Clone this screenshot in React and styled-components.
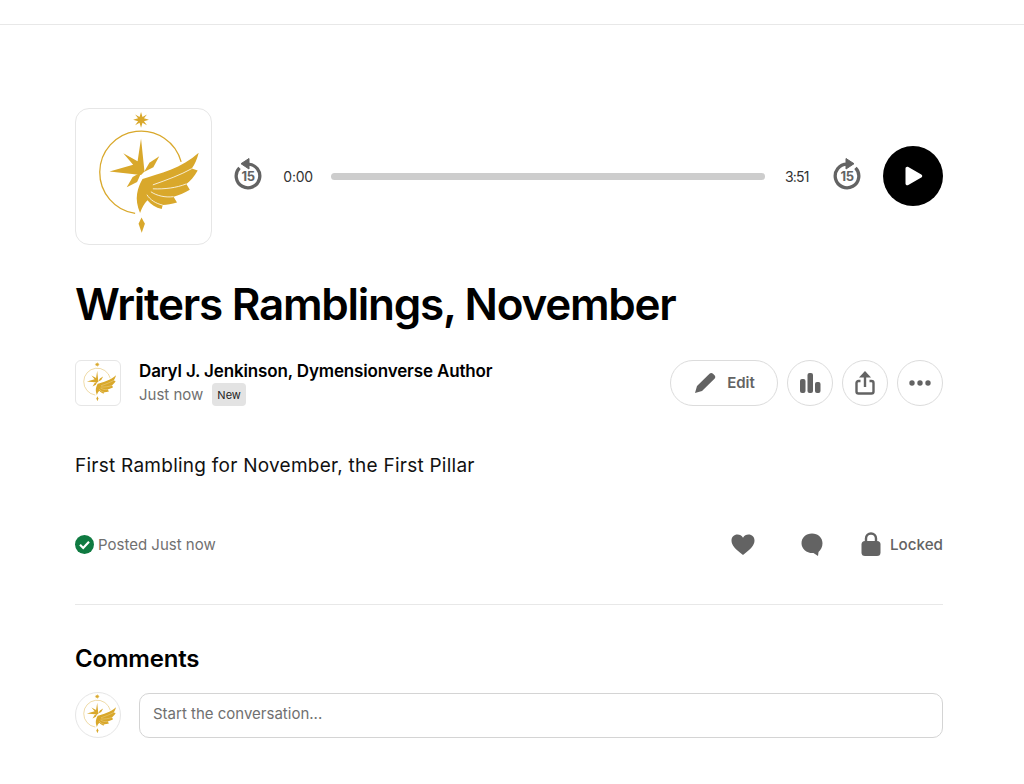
import React from 'react';
import styled, { createGlobalStyle } from 'styled-components';

const GlobalStyle = createGlobalStyle`
    html, body {
        margin: 0;
        background: #fff;
        font-family: Inter, "Liberation Sans", sans-serif;
        color: #000;
    }
    * {
        box-sizing: border-box;
    }
`;

const Page = styled.div`
    height: 784px;
    overflow: hidden;
`;

const TopBar = styled.div`
    height: 25px;
    border-bottom: 1px solid #e8e8e8;
`;

const Main = styled.main`
    padding: 83px 81px 0 75px;
`;

const Player = styled.section`
    display: flex;
    align-items: center;
    height: 137px;
`;

const Artwork = styled.div`
    width: 137px;
    height: 137px;
    flex: none;
    border: 1px solid #e6e6e6;
    border-radius: 14px;
    background: #fff;
`;

const Controls = styled.div`
    flex: 1;
    display: flex;
    align-items: center;
    margin-left: 22px;
    padding-bottom: 1px;
`;

const SkipIcon = styled.svg`
    width: 28px;
    height: 36px;
    flex: none;
    color: #636363;
`;

const Time = styled.span`
    font-size: 14px;
    letter-spacing: ${(p) => p.$spacing}px;
    color: #333;
    flex: none;
    width: ${(p) => p.$width}px;
    text-align: ${(p) => p.$align};
`;

const Track = styled.div`
    flex: 1;
    height: 7px;
    margin: 0 20px 0 18px;
    border-radius: 4px;
    background: #cdcdcd;
`;

const SkipGap = styled.span`
    width: 24px;
    flex: none;
`;

const PlayButton = styled.button`
    width: 60px;
    height: 60px;
    flex: none;
    margin-left: 22px;
    padding: 0;
    border: 0;
    border-radius: 50%;
    background: #000;
    display: flex;
    align-items: center;
    justify-content: center;
`;

const Title = styled.h1`
    margin: 30px 0 0;
    font-size: 44px;
    line-height: 58px;
    font-weight: 600;
    letter-spacing: -1.25px;
`;

const MetaRow = styled.div`
    display: flex;
    align-items: center;
    justify-content: space-between;
    margin-top: 27px;
    height: 46px;
`;

const Author = styled.div`
    display: flex;
    align-items: center;
    gap: 18px;
`;

const Avatar = styled.div`
    width: 46px;
    height: 46px;
    flex: none;
    border: 1px solid #e6e6e6;
    border-radius: ${(p) => (p.$round ? '50%' : '6px')};
    background: #fff;
    overflow: hidden;
`;

const AuthorName = styled.div`
    font-size: 17px;
    line-height: 22px;
    font-weight: 600;
    letter-spacing: -0.15px;
    margin-top: -1px;
`;

const AuthorSub = styled.div`
    display: flex;
    align-items: center;
    gap: 9px;
    margin-top: 1px;
    font-size: 15px;
    color: #707070;
`;

const Badge = styled.span`
    padding: 0 5px;
    height: 23px;
    line-height: 24px;
    border-radius: 4px;
    background: #e3e3e3;
    color: #222;
    font-size: 11px;
    font-weight: 400;
`;

const Actions = styled.div`
    display: flex;
    align-items: center;
    gap: 9px;
`;

const ActionButton = styled.button`
    height: 46px;
    width: ${(p) => (p.$wide ? '108px' : '46px')};
    padding: 0;
    border: 1px solid #dcdcdc;
    border-radius: 23px;
    background: #fff;
    color: #636363;
    display: flex;
    align-items: center;
    justify-content: center;
    gap: 10px;
    font-family: inherit;
    font-size: 15px;
    font-weight: 600;
`;

const EditLabel = styled.span`
    margin-bottom: 2px;
`;

const Body = styled.p`
    margin: 47px 0 0;
    font-size: 19px;
    letter-spacing: 0.25px;
    line-height: 26px;
    color: #111;
`;

const StatusRow = styled.div`
    display: flex;
    align-items: center;
    justify-content: space-between;
    margin-top: 51px;
    height: 28px;
`;

const Posted = styled.div`
    display: flex;
    align-items: center;
    gap: 4px;
    font-size: 15px;
    color: #707070;
`;

const Reactions = styled.div`
    display: flex;
    align-items: center;
    color: #636363;
`;

const ReactionIcon = styled.svg`
    width: 26px;
    height: 26px;
    margin-right: ${(p) => p.$gap}px;
`;

const Locked = styled.span`
    font-size: 15.2px;
    font-weight: 500;
    margin-left: 8px;
`;

const Divider = styled.hr`
    margin: 46px 0 0;
    border: 0;
    border-top: 1px solid #e8e8e8;
`;

const CommentsTitle = styled.h2`
    margin: 39px 0 0;
    font-size: 24px;
    line-height: 30px;
    font-weight: 600;
    letter-spacing: -0.2px;
`;

const CommentRow = styled.div`
    display: flex;
    align-items: center;
    gap: 18px;
    margin-top: 18px;
`;

const CommentInput = styled.div`
    flex: 1;
    height: 45px;
    padding: 0 0 3px 13px;
    display: flex;
    align-items: center;
    border: 1px solid #d4d4d4;
    border-radius: 10px;
    font-size: 15px;
    color: #707070;
`;

const Logo = () => (
    <svg viewBox="0 0 137 137" width="100%" height="100%" style={{ display: 'block' }}>
        <g fill="#d9a82b">
            <path d="M66 3l1.500 5L72 5.500 69 9.500 74 11l-5 1.500 3 4-4.500-2.500L66 19l-1.500-5L60 16.500l3-4L58 11l5-1.500-3-4L64.500 8z" />
            <path d="M66 30l3.500 33.500L66 67 34 63.500l24-7-10-11.500 14.500 8z" />
            <path d="M84.500 48l-6 11-9.500 5 5.500-9.500z" />
            <path d="M51.500 79.500l6-10.500 9-5-4.500 10z" />
            <path d="M66.500 110l3.400 6.500-3.200 9-3.200-9z" />
            <path d="M67.500 71C84 66 108 60 124.500 44.500 123 51 120.500 56.500 117.500 60.500L123.500 62.500C120 69 116 73 112 76L115.500 82C110 85.500 104 87.500 99 89L102.500 95C97 96.500 92.500 97.500 88 97.500L87 101.500C81 100 76 97 72.500 92.500 69 96 67 100 65 105.500 62 98 61 92 62 86 63 80 65 75 67.500 71z" />
        </g>
        <path d="M106.700 53.700A42 42 0 1 0 60 106" fill="none" stroke="#d9a82b" strokeWidth="1.300" />
        <g fill="none" stroke="#fff" strokeWidth="0.800">
            <path d="M117.500 60.500C106 67 92 72 78 77" />
            <path d="M112 76C102 80 90 81.500 78 81" />
            <path d="M99 89C90 90 82 88 76 84" />
            <path d="M88 97.500C81 96 75 92 72 87" />
        </g>
    </svg>
);

// back and forward share the ring and arrow, only the label stays unmirrored
const Skip = ({ forward }) => (
    <SkipIcon viewBox="0 0 28 36">
        <g transform={forward ? 'translate(28 0) scale(-1 1)' : undefined}>
            <path d="M14 6.200A11.800 11.800 0 1 1 5.500 9.800" fill="none" stroke="currentColor" strokeWidth="3.300" />
            <path d="M15 .5v10.500L7 5.700z" fill="currentColor" stroke="currentColor" strokeWidth="1" strokeLinejoin="round" />
        </g>
        <text x="14" y="22.800" textAnchor="middle" fontFamily="Inter, sans-serif" fontSize="13" fontWeight="700" fill="currentColor" letterSpacing="-0.4">15</text>
    </SkipIcon>
);

const App = () => {
    return (
        <Page>
            <GlobalStyle />
            <TopBar />
            <Main>
                <Player>
                    <Artwork><Logo /></Artwork>
                    <Controls>
                        <Skip />
                        <Time $width={51} $align="right" $spacing={-0.2}>0:00</Time>
                        <Track />
                        <Time $width={24} $align="left" $spacing={-0.8}>3:51</Time>
                        <SkipGap />
                        <Skip forward />
                        <PlayButton aria-label="Play">
                            <svg width="22" height="22" viewBox="0 0 22 22">
                                <path d="M3.500 3.500c0-1.500 1.500-2.300 2.800-1.500l13 7.500c1.300.7 1.300 2.400 0 3.100l-13 7.400c-1.300.8-2.800 0-2.800-1.500z" fill="#fff" />
                            </svg>
                        </PlayButton>
                    </Controls>
                </Player>
                <Title>Writers Ramblings, November</Title>
                <MetaRow>
                    <Author>
                        <Avatar><Logo /></Avatar>
                        <div>
                            <AuthorName>Daryl J. Jenkinson, Dymensionverse Author</AuthorName>
                            <AuthorSub>Just now <Badge>New</Badge></AuthorSub>
                        </div>
                    </Author>
                    <Actions>
                        <ActionButton $wide>
                            <svg width="24" height="24" viewBox="0 0 24 24">
                                <path d="M2 22l2-7L16.500 2.800c1-1 2.500-1 3.500 0l1.500 1.500c1 1 1 2.500 0 3.500L9 20z" fill="currentColor" />
                            </svg>
                            <EditLabel>Edit</EditLabel>
                        </ActionButton>
                        <ActionButton aria-label="Insights">
                            <svg width="24" height="24" viewBox="0 0 24 24">
                                <rect x="2" y="8" width="5.500" height="14" rx="2" fill="currentColor" />
                                <rect x="9.500" y="2" width="5.500" height="20" rx="2" fill="currentColor" />
                                <rect x="17" y="11" width="5.500" height="11" rx="2" fill="currentColor" />
                            </svg>
                        </ActionButton>
                        <ActionButton aria-label="Share">
                            <svg width="24" height="26" viewBox="0 0 24 26" fill="none" stroke="currentColor" strokeWidth="2.400">
                                <path d="M7.500 11H5.500a2 2 0 0 0-2 2v8.500a2 2 0 0 0 2 2h13a2 2 0 0 0 2-2V13a2 2 0 0 0-2-2h-2" />
                                <path d="M12 17V3" />
                                <path d="M12 1l6 6.500H6z" fill="currentColor" stroke="none" />
                            </svg>
                        </ActionButton>
                        <ActionButton aria-label="More">
                            <svg width="22" height="6" viewBox="0 0 22 6" fill="currentColor">
                                <circle cx="3" cy="3" r="2.700" />
                                <circle cx="11" cy="3" r="2.700" />
                                <circle cx="19" cy="3" r="2.700" />
                            </svg>
                        </ActionButton>
                    </Actions>
                </MetaRow>
                <Body>First Rambling for November, the First Pillar</Body>
                <StatusRow>
                    <Posted>
                        <svg width="19" height="19" viewBox="0 0 19 19">
                            <circle cx="9.500" cy="9.500" r="9.500" fill="#0f7a41" />
                            <path d="M5 9.800l3.200 3.200L14 6.800" fill="none" stroke="#fff" strokeWidth="2.200" />
                        </svg>
                        Posted Just now
                    </Posted>
                    <Reactions>
                        <ReactionIcon $gap={43} viewBox="0 0 26 26">
                            <path d="M13 24C5 18 1.500 14 1.500 9.500 1.500 6 4 3.500 7.500 3.500c2.300 0 4.300 1.200 5.500 3.200 1.200-2 3.200-3.200 5.500-3.200 3.500 0 6 2.500 6 6C24.500 14 21 18 13 24z" fill="currentColor" />
                        </ReactionIcon>
                        <ReactionIcon $gap={35} viewBox="0 0 26 26">
                            <path d="M13 2.500c6 0 10.500 4.200 10.500 9.700 0 3.800-1.700 6.800-4 8.800l-.5 4-4.500-3C8 22.500 2.500 18 2.500 12.200 2.500 6.700 7 2.500 13 2.500z" fill="currentColor" />
                        </ReactionIcon>
                        <svg width="22" height="26" viewBox="0 0 22 26" fill="currentColor">
                            <path d="M6 12V7.500a5 5 0 0 1 10 0V12" fill="none" stroke="currentColor" strokeWidth="2.400" />
                            <rect x="1.500" y="10" width="19" height="15" rx="3.500" />
                        </svg>
                        <Locked>Locked</Locked>
                    </Reactions>
                </StatusRow>
                <Divider />
                <CommentsTitle>Comments</CommentsTitle>
                <CommentRow>
                    <Avatar $round><Logo /></Avatar>
                    <CommentInput>Start the conversation...</CommentInput>
                </CommentRow>
            </Main>
        </Page>
    );
};

export default App;
